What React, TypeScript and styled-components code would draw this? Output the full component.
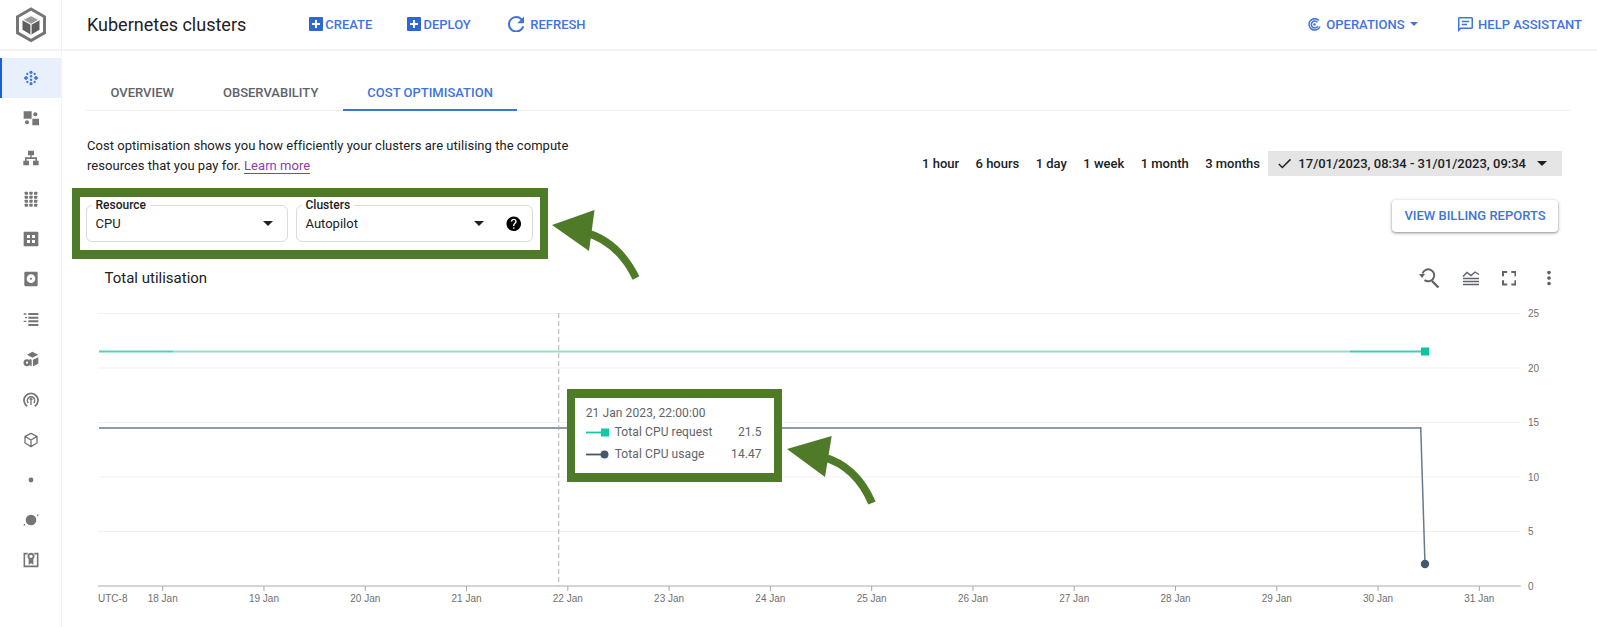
import React from "react";
import styled, { createGlobalStyle } from "styled-components";

const Global = createGlobalStyle`
  html, body { margin: 0; padding: 0; background: #fff; }
  body { font-family: Roboto, "Liberation Sans", sans-serif; color: #202124; }
  * { box-sizing: border-box; }
`;

const Page = styled.div`
  position: relative;
  display: flex;
  width: 1597px;
  height: 627px;
  overflow: hidden;
  background: #fff;
`;

const Sidebar = styled.nav`
  flex: 0 0 62px;
  border-right: 1px solid #f1f3f4;
`;

const LogoSlot = styled.div`
  display: flex;
  align-items: center;
  justify-content: center;
  height: 51px;
  margin-bottom: 7px;
  border-bottom: 2px solid #f3f3f3;
`;

const NavItem = styled.div<{ $active?: boolean }>`
  display: flex;
  align-items: center;
  justify-content: center;
  height: 40.2px;
  color: ${(p) => (p.$active ? "#3f74dc" : "#757575")};
  background: ${(p) => (p.$active ? "#e8f0fe" : "transparent")};
  box-shadow: ${(p) => (p.$active ? "inset 2px 0 0 #1a5fd8" : "none")};
`;

const Main = styled.div`
  flex: 1;
  min-width: 0;
  display: flex;
  flex-direction: column;
`;

const TopBar = styled.header`
  display: flex;
  align-items: center;
  height: 51px;
  padding: 0 15px 1px 25px;
  border-bottom: 2px solid #f3f3f3;
`;

const PageTitle = styled.h1`
  margin: 0 63px 0 0;
  font-size: 18px;
  font-weight: 400;
  color: #202124;
`;

const ActionGroup = styled.div<{ $right?: boolean; $gap: number }>`
  display: flex;
  align-items: center;
  gap: ${(p) => p.$gap}px;
  margin-left: ${(p) => (p.$right ? "auto" : "0")};
`;

const ActionButton = styled.span<{ $gap: number }>`
  display: flex;
  align-items: center;
  gap: ${(p) => p.$gap}px;
  font-size: 13px;
  font-weight: 500;
  color: #3f74dc;
  white-space: nowrap;
`;

const RefreshButton = styled(ActionButton)`
  margin-left: 2px;
`;

const Content = styled.div`
  flex: 1;
  padding: 0 27px 0 25px;
`;

const TabBar = styled.div`
  display: flex;
  height: 40px;
  margin-top: 19.5px;
  margin-left: -1px;
  border-bottom: 1px solid #eeeeee;
`;

const Tab = styled.div<{ $active?: boolean }>`
  display: flex;
  align-items: center;
  height: 40px;
  padding: 6px 24.5px 0;
  font-size: 13px;
  font-weight: 500;
  color: ${(p) => (p.$active ? "#3f74dc" : "#5f6368")};
  border-bottom: 2px solid ${(p) => (p.$active ? "#3f74dc" : "transparent")};
  margin-bottom: -1px;
`;

const IntroRow = styled.div`
  display: flex;
  align-items: flex-end;
  justify-content: space-between;
  margin-top: 25px;
  padding-right: 8px;
`;

const Description = styled.p`
  width: 490px;
  margin: 0;
  font-size: 13px;
  line-height: 20px;
  letter-spacing: 0.035px;
  color: #202124;
`;

const LearnMore = styled.a`
  color: #8e3ab5;
  border-bottom: 1px solid #8e3ab5;
`;

const RangeBar = styled.div`
  display: flex;
  align-items: center;
  font-size: 13px;
  font-weight: 500;
  color: #202124;
`;

const RangeOption = styled.span`
  margin-right: 16.4px;
`;

const RangeSelected = styled.span`
  display: flex;
  align-items: center;
  height: 25px;
  margin-left: -8px;
  padding: 0 15px 0 10px;
  gap: 7px;
  background: #e5e5e5;
`;

const SelectedCaret = styled.span`
  display: flex;
  margin-left: 4px;
`;

const FilterRow = styled.div`
  display: flex;
  align-items: flex-start;
  justify-content: space-between;
  margin-top: 12px;
`;

const HighlightedFilters = styled.div`
  display: flex;
  gap: 8px;
  width: 476.5px;
  height: 71.5px;
  margin-left: -15.5px;
  padding: 8.7px 6px 0;
  border: solid #4f7a28;
  border-width: 9px 8.5px;
`;

const SelectField = styled.div<{ $width: number }>`
  position: relative;
  display: flex;
  align-items: center;
  width: ${(p) => p.$width}px;
  height: 36.6px;
  padding: 1px 14px 0 9px;
  border: 1px solid #d9dbdd;
  border-radius: 6px;
  font-size: 13px;
  color: #202124;
`;

const SelectLabel = styled.span`
  position: absolute;
  top: -8px;
  left: 5px;
  padding: 0 4px;
  background: #fff;
  font-size: 12px;
  font-weight: 500;
  line-height: 14px;
`;

const SelectValue = styled.span`
  flex: 1;
`;

const Caret = styled.span<{ $size?: number }>`
  display: inline-block;
  width: 0;
  height: 0;
  border-left: ${(p) => p.$size ?? 5}px solid transparent;
  border-right: ${(p) => p.$size ?? 5}px solid transparent;
  border-top: ${(p) => p.$size ?? 5}px solid currentColor;
`;

const HelpSlot = styled.span`
  display: flex;
  margin-left: 21px;
  margin-right: -4px;
  color: #000;
`;

const BillingButton = styled.button`
  width: 166px;
  height: 32px;
  margin: 12px 12px 0 0;
  padding: 0;
  border: 0;
  border-radius: 4px;
  background: #fff;
  color: #3f74dc;
  font-family: inherit;
  font-size: 13px;
  font-weight: 500;
  box-shadow: 0 1px 3px 1px rgba(60, 64, 67, 0.22), 0 1px 2px rgba(60, 64, 67, 0.35);
`;

const ChartHeader = styled.div`
  display: flex;
  align-items: center;
  justify-content: space-between;
  height: 39.5px;
  margin-top: 1px;
  padding: 0 10px 3px 17.5px;
`;

const ChartTitle = styled.h2`
  margin: 0;
  font-size: 15px;
  font-weight: 400;
  color: #202124;
`;

const ChartTools = styled.div`
  display: flex;
  align-items: center;
  gap: 22px;
  color: #5f6368;
`;

const ChartArea = styled.div`
  position: relative;
  width: 1484px;
  height: 327px;
  margin-left: -1px;
`;

const Plot = styled.svg`
  display: block;
  overflow: visible;
`;

const AxisText = styled.text`
  font-family: "Liberation Sans", Arial, sans-serif;
  font-size: 10px;
  fill: #707070;
`;

const ChartTooltip = styled.div`
  position: absolute;
  left: 480.7px;
  top: 89px;
  width: 215px;
  height: 93.5px;
  padding: 7px 12px 0 11px;
  background: #fff;
  border: solid #4f7a28;
  border-width: 9px 8.7px;
  font-size: 12px;
  letter-spacing: 0.1px;
  color: #5f6368;
`;

const TooltipDate = styled.div`
  line-height: 17px;
`;

const TooltipRow = styled.div`
  display: flex;
  align-items: center;
  height: 21.7px;
`;

const TooltipName = styled.span`
  flex: 1;
  margin-left: 6px;
`;

const CalloutArrow = styled.svg<{ $left: number; $top: number }>`
  position: absolute;
  left: ${(p) => p.$left}px;
  top: ${(p) => p.$top}px;
`;

type IconProps = { size?: number; children: React.ReactNode; box?: string };
const Icon = ({ size = 16, children, box = "0 0 24 24" }: IconProps) => (
  <svg width={size} height={size} viewBox={box} fill="currentColor">
    {children}
  </svg>
);

const Logo = () => (
  <svg width="32" height="36" viewBox="0 0 32 36">
    <path d="M16 2 L29.5 9.8 V25.8 L16 33.6 L2.5 25.8 V9.8 Z" fill="none" stroke="#757575" strokeWidth="3" />
    <path d="M16 8 L24.5 12.8 V22.8 L16 27.8 L7.5 22.8 V12.8 Z" fill="#5f5f5f" />
    <path d="M7.8 12.8 L16 8.4 L24.2 12.8 L16 17.4 Z" fill="#9a9a9a" stroke="#fff" strokeWidth="1.2" />
    <path d="M16 17.4 V27.6" stroke="#fff" strokeWidth="1.2" />
  </svg>
);

const navIcons: React.ReactNode[] = [
  <Icon key="a" size={16}>
    <circle cx="12" cy="3.5" r="2.4" />
    <circle cx="6.5" cy="6" r="1.7" />
    <circle cx="17.5" cy="6" r="1.7" />
    <circle cx="12" cy="9.5" r="1.9" />
    <circle cx="12" cy="14.5" r="1.9" />
    <circle cx="6.5" cy="18" r="1.7" />
    <circle cx="17.5" cy="18" r="1.7" />
    <circle cx="12" cy="20.5" r="2.4" />
    <path d="M1 12l3.5-3.5L8 12l-3.5 3.5zM16 12l3.5-3.5L23 12l-3.5 3.5z" />
  </Icon>,
  <Icon key="b" size={16}>
    <path d="M1 2h12v11H1zM14 13h10v10H14z" />
    <circle cx="18.5" cy="6.5" r="3" />
    <circle cx="6" cy="18.5" r="3" />
  </Icon>,
  <Icon key="c" size={16}>
    <path d="M7.5 1h9v7h-3.5v3H21v5h2.5v7H15v-7h3.5v-2.5h-13V16H9v7H.5v-7H3v-5h8V8H7.5z" />
  </Icon>,
  <Icon key="d" size={16}>
    {[0, 1, 2].flatMap((c) =>
      [0, 1, 2, 3].map((r) => <rect key={`${c}${r}`} x={2.5 + c * 7} y={1 + r * 6} width="5" height="4.5" rx="1" />)
    )}
  </Icon>,
  <Icon key="e" size={16}>
    <path fillRule="evenodd" d="M2 1h20a1 1 0 0 1 1 1v20a1 1 0 0 1-1 1H2a1 1 0 0 1-1-1V2a1 1 0 0 1 1-1zM6 6v4.5h4.5V6zM13.5 6v4.5H18V6zM6 13.5V18h4.5v-4.5zM13.5 13.5V18H18v-4.5z" />
  </Icon>,
  <Icon key="f" size={16}>
    <path fillRule="evenodd" d="M4 1h16a2 2 0 0 1 2 2v18a2 2 0 0 1-2 2H4a2 2 0 0 1-2-2V3a2 2 0 0 1 2-2zM12 5a6.5 6.5 0 1 0 0 13 6.5 6.5 0 0 0 0-13zM12 10a1.6 1.6 0 1 1 0 3.2 1.6 1.6 0 0 1 0-3.2z" />
  </Icon>,
  <Icon key="g" size={16}>
    <path d="M8 3h15v3H8zM8 8.5h15v3H8zM8 14h15v3H8zM8 19.5h15v3H8zM1 3.5h4v2H1zM3 9h3v2H3zM1 14.5h4v2H1z" />
  </Icon>,
  <Icon key="h" size={16}>
    <path d="M14 1l9 4.5-9 4.5-8-4.5zM10 11.5l3 1.5v10l-3-1.5zM15 13l8-3.5V19l-8 4z" />
    <circle cx="6" cy="17.5" r="5.2" />
    <circle cx="6" cy="17.5" r="1.7" fill="#fff" />
  </Icon>,
  <Icon key="i" size={16}>
    <path fill="none" stroke="currentColor" strokeWidth="2.6" d="M6.5 21.5A10.5 10.5 0 1 1 17.5 21.5" />
    <path fill="none" stroke="currentColor" strokeWidth="2.2" d="M8 16.5A5.5 5.5 0 1 1 16 16.5" />
    <path d="M12 8l3 3.5h-2v8h-2v-8H9z" />
  </Icon>,
  <Icon key="j" size={16}>
    <path fill="none" stroke="currentColor" strokeWidth="2" d="M12 2l9 4.5v10L12 22l-9-5.5v-10zM3 6.5l9 5.5 9-5.5M12 12v10" />
  </Icon>,
  <Icon key="k" size={16}>
    <circle cx="12" cy="12" r="3.6" />
  </Icon>,
  <Icon key="l" size={16}>
    <circle cx="12" cy="12" r="8" />
    <path fill="none" stroke="currentColor" strokeWidth="1.8" strokeDasharray="3 2" d="M1.5 20.5Q2 19 3 17M22.5 3.5Q22 6 20.5 8" />
  </Icon>,
  <Icon key="m" size={16}>
    <path fill="none" stroke="currentColor" strokeWidth="2.4" d="M7 2.5H2v19h20v-19h-5" />
    <path fillRule="evenodd" d="M12 1a5.5 5.5 0 0 1 3.5 9.7V19l-3.5-2-3.5 2v-8.3A5.5 5.5 0 0 1 12 1zM12 4a2.5 2.5 0 1 0 0 5 2.5 2.5 0 0 0 0-5z" />
  </Icon>,
];

const PlusSquare = () => (
  <svg width="14" height="14" viewBox="0 0 14 14">
    <rect width="14" height="14" rx="1" fill="#2f66d6" />
    <path d="M6 3h2v3h3v2H8v3H6V8H3V6h3z" fill="#fff" />
  </svg>
);

const ticks = ["18", "19", "20", "21", "22", "23", "24", "25", "26", "27", "28", "29", "30", "31"];
const grid = [25, 20, 15, 10, 5];
const yOf = (v: number) => 586 - v * 10.9;
const xOfTick = (i: number) => 162.7 + i * 101.28;

const Chart = () => (
  <Plot width="1484" height="327" viewBox="86 300 1484 327">
    {grid.map((v) => (
      <line key={v} x1="98" x2="1521" y1={yOf(v)} y2={yOf(v)} stroke="#f1f1f1" strokeWidth="1" />
    ))}
    {[...grid, 0].map((v) => (
      <AxisText key={v} x="1528" y={yOf(v) + 3.5}>
        {v}
      </AxisText>
    ))}
    <line x1="558.7" x2="558.7" y1="313" y2="586" stroke="#bdbdbd" strokeWidth="1.2" strokeDasharray="5 3" />
    <line x1="99" x2="173" y1="351.5" y2="351.5" stroke="#54d2bb" strokeWidth="2" />
    <line x1="173" x2="1350" y1="351.5" y2="351.5" stroke="#8fe0d0" strokeWidth="2" />
    <line x1="1350" x2="1425" y1="351.5" y2="351.5" stroke="#3fcdb3" strokeWidth="2" />
    <rect x="1421" y="347.5" width="8" height="8" fill="#0bc4a4" />
    <path d="M99 428H1420.7" fill="none" stroke="#8d9ca6" strokeWidth="2" />
    <path d="M1420.7 427L1425 564" fill="none" stroke="#667b88" strokeWidth="1.5" />
    <circle cx="1425" cy="564" r="4.2" fill="#45596b" />
    <line x1="98" x2="1521" y1="586" y2="586" stroke="#c4c7c9" strokeWidth="1.6" />
    <AxisText x="98" y="601.5">UTC-8</AxisText>
    {ticks.map((d, i) => (
      <g key={d}>
        <line x1={xOfTick(i)} x2={xOfTick(i)} y1="586" y2="591" stroke="#a8a8a8" strokeWidth="1" />
        <AxisText x={xOfTick(i)} y="601.5" textAnchor="middle">
          {d} Jan
        </AxisText>
      </g>
    ))}
  </Plot>
);

const LegendSwatch = ({ color, round }: { color: string; round?: boolean }) => (
  <svg width="23" height="9" viewBox="0 0 23 9">
    <line x1="0" x2="16" y1="4.5" y2="4.5" stroke={color} strokeWidth="1.8" />
    {round ? <circle cx="18.5" cy="4.5" r="4" fill={color} /> : <rect x="15" y="0.5" width="8" height="8" fill={color} />}
  </svg>
);

type ArrowProps = { left: number; top: number; head: string; shaft: string; thick: number };
const Arrow = ({ left, top, head, shaft, thick }: ArrowProps) => (
  <CalloutArrow $left={left} $top={top} width={100} height={80} viewBox="0 0 100 80">
    <path d={head} fill="#4f7a28" />
    <path d={shaft} fill="none" stroke="#4f7a28" strokeWidth={thick} />
  </CalloutArrow>
);

export default function App() {
  return (
    <Page>
      <Global />
      <Sidebar>
        <LogoSlot>
          <Logo />
        </LogoSlot>
        {navIcons.map((ic, i) => (
          <NavItem key={i} $active={i === 0}>
            {ic}
          </NavItem>
        ))}
      </Sidebar>
      <Main>
        <TopBar>
          <PageTitle>Kubernetes clusters</PageTitle>
          <ActionGroup $gap={35}>
            <ActionButton $gap={2}>
              <PlusSquare />
              CREATE
            </ActionButton>
            <ActionButton $gap={2}>
              <PlusSquare />
              DEPLOY
            </ActionButton>
            <RefreshButton $gap={6}>
              <Icon size={16.5} box="4 4 16 16">
                <path d="M17.65 6.35A7.958 7.958 0 0 0 12 4c-4.42 0-7.99 3.58-7.99 8s3.57 8 7.99 8c3.73 0 6.84-2.55 7.73-6h-2.08A5.99 5.99 0 0 1 12 18c-3.31 0-6-2.69-6-6s2.69-6 6-6c1.66 0 3.14.69 4.22 1.78L13 11h7V4l-2.35 2.35z" />
              </Icon>
              REFRESH
            </RefreshButton>
          </ActionGroup>
          <ActionGroup $right $gap={40}>
            <ActionButton $gap={5.5}>
              <svg width="13" height="13" viewBox="0 0 13 13" fill="none" stroke="currentColor">
                <path strokeWidth="1.5" d="M11 2.6A5.7 5.7 0 1 0 12 8.5" />
                <path strokeWidth="1.5" d="M9.4 4.4A3.4 3.4 0 1 0 9.8 8" />
                <circle cx="6.5" cy="6.5" r="1.3" fill="currentColor" stroke="none" />
              </svg>
              OPERATIONS
              <Caret $size={4} />
            </ActionButton>
            <ActionButton $gap={5}>
              <Icon size={15} box="2 2 20 20">
                <path d="M20 2H4c-1.1 0-2 .9-2 2v18l4-4h14c1.1 0 2-.9 2-2V4c0-1.1-.9-2-2-2zm0 14H5.17L4 17.17V4h16v12zM7 7h10v2H7zM7 11h7v2H7z" />
              </Icon>
              HELP ASSISTANT
            </ActionButton>
          </ActionGroup>
        </TopBar>
        <Content>
          <TabBar>
            <Tab>OVERVIEW</Tab>
            <Tab>OBSERVABILITY</Tab>
            <Tab $active>COST OPTIMISATION</Tab>
          </TabBar>
          <IntroRow>
            <Description>
              Cost optimisation shows you how efficiently your clusters are utilising the compute resources that you pay for.{" "}
              <LearnMore>Learn more</LearnMore>
            </Description>
            <RangeBar>
              <RangeOption>1 hour</RangeOption>
              <RangeOption>6 hours</RangeOption>
              <RangeOption>1 day</RangeOption>
              <RangeOption>1 week</RangeOption>
              <RangeOption>1 month</RangeOption>
              <RangeOption>3 months</RangeOption>
              <RangeSelected>
                <Icon size={13} box="3 5 18 14">
                  <path d="M9 16.17 4.83 12l-1.42 1.41L9 19 21 7l-1.41-1.41z" />
                </Icon>
                17/01/2023, 08:34 - 31/01/2023, 09:34
                <SelectedCaret>
                  <Caret />
                </SelectedCaret>
              </RangeSelected>
            </RangeBar>
          </IntroRow>
          <FilterRow>
            <HighlightedFilters>
              <SelectField $width={202}>
                <SelectLabel>Resource</SelectLabel>
                <SelectValue>CPU</SelectValue>
                <Caret />
              </SelectField>
              <SelectField $width={237.5}>
                <SelectLabel>Clusters</SelectLabel>
                <SelectValue>Autopilot</SelectValue>
                <Caret />
                <HelpSlot>
                  <Icon size={17.5}>
                    <path d="M12 2C6.48 2 2 6.48 2 12s4.48 10 10 10 10-4.48 10-10S17.52 2 12 2zm1 17h-2v-2h2v2zm2.07-7.75l-.9.92C13.45 12.9 13 13.5 13 15h-2v-.5c0-1.1.45-2.1 1.17-2.83l1.24-1.26c.37-.36.59-.86.59-1.41 0-1.1-.9-2-2-2s-2 .9-2 2H8c0-2.21 1.79-4 4-4s4 1.79 4 4c0 .88-.36 1.68-.93 2.25z" />
                  </Icon>
                </HelpSlot>
              </SelectField>
            </HighlightedFilters>
            <BillingButton>VIEW BILLING REPORTS</BillingButton>
          </FilterRow>
          <ChartHeader>
            <ChartTitle>Total utilisation</ChartTitle>
            <ChartTools>
              <svg width="22" height="22" viewBox="0 0 22 22" fill="none" stroke="currentColor" strokeWidth="2">
                <path d="M4.5 6.5A6 6 0 1 1 6.5 13" />
                <path d="M14 14l6.5 6.5" strokeWidth="2.4" />
                <path d="M1 7h6L4 11z" fill="currentColor" stroke="none" />
              </svg>
              <svg width="18" height="18" viewBox="0 0 18 18" fill="none" stroke="currentColor" strokeWidth="1.4">
                <path d="M1 7.5L5 3.5 9 6.5 13 3 17 5.5" />
                <path d="M1 9.5h16M1 12.5h16M1 15.5h16" />
              </svg>
              <Icon size={14.5} box="5 5 14 14">
                <path d="M7 14H5v5h5v-2H7v-3zm-2-4h2V7h3V5H5v5zm12 7h-3v2h5v-5h-2v3zM14 5v2h3v3h2V5h-5z" />
              </Icon>
              <Icon size={22}>
                <path d="M12 8c1.1 0 2-.9 2-2s-.9-2-2-2-2 .9-2 2 .9 2 2 2zm0 2c-1.1 0-2 .9-2 2s.9 2 2 2 2-.9 2-2-.9-2-2-2zm0 6c-1.1 0-2 .9-2 2s.9 2 2 2 2-.9 2-2-.9-2-2-2z" />
              </Icon>
            </ChartTools>
          </ChartHeader>
          <ChartArea>
            <Chart />
            <ChartTooltip>
              <TooltipDate>21 Jan 2023, 22:00:00</TooltipDate>
              <TooltipRow>
                <LegendSwatch color="#14c7a8" />
                <TooltipName>Total CPU request</TooltipName>
                <span>21.5</span>
              </TooltipRow>
              <TooltipRow>
                <LegendSwatch color="#45596b" round />
                <TooltipName>Total CPU usage</TooltipName>
                <span>14.47</span>
              </TooltipRow>
            </ChartTooltip>
          </ChartArea>
        </Content>
      </Main>
      <Arrow left={550} top={208} head="M2 17L44.5 2 39 43Z" shaft="M34 24Q68 33 86 70" thick={7.5} />
      <Arrow left={785} top={434} head="M2 15L46.7 2 40 43Z" shaft="M38 23Q71 32 87 69" thick={8} />
    </Page>
  );
}
